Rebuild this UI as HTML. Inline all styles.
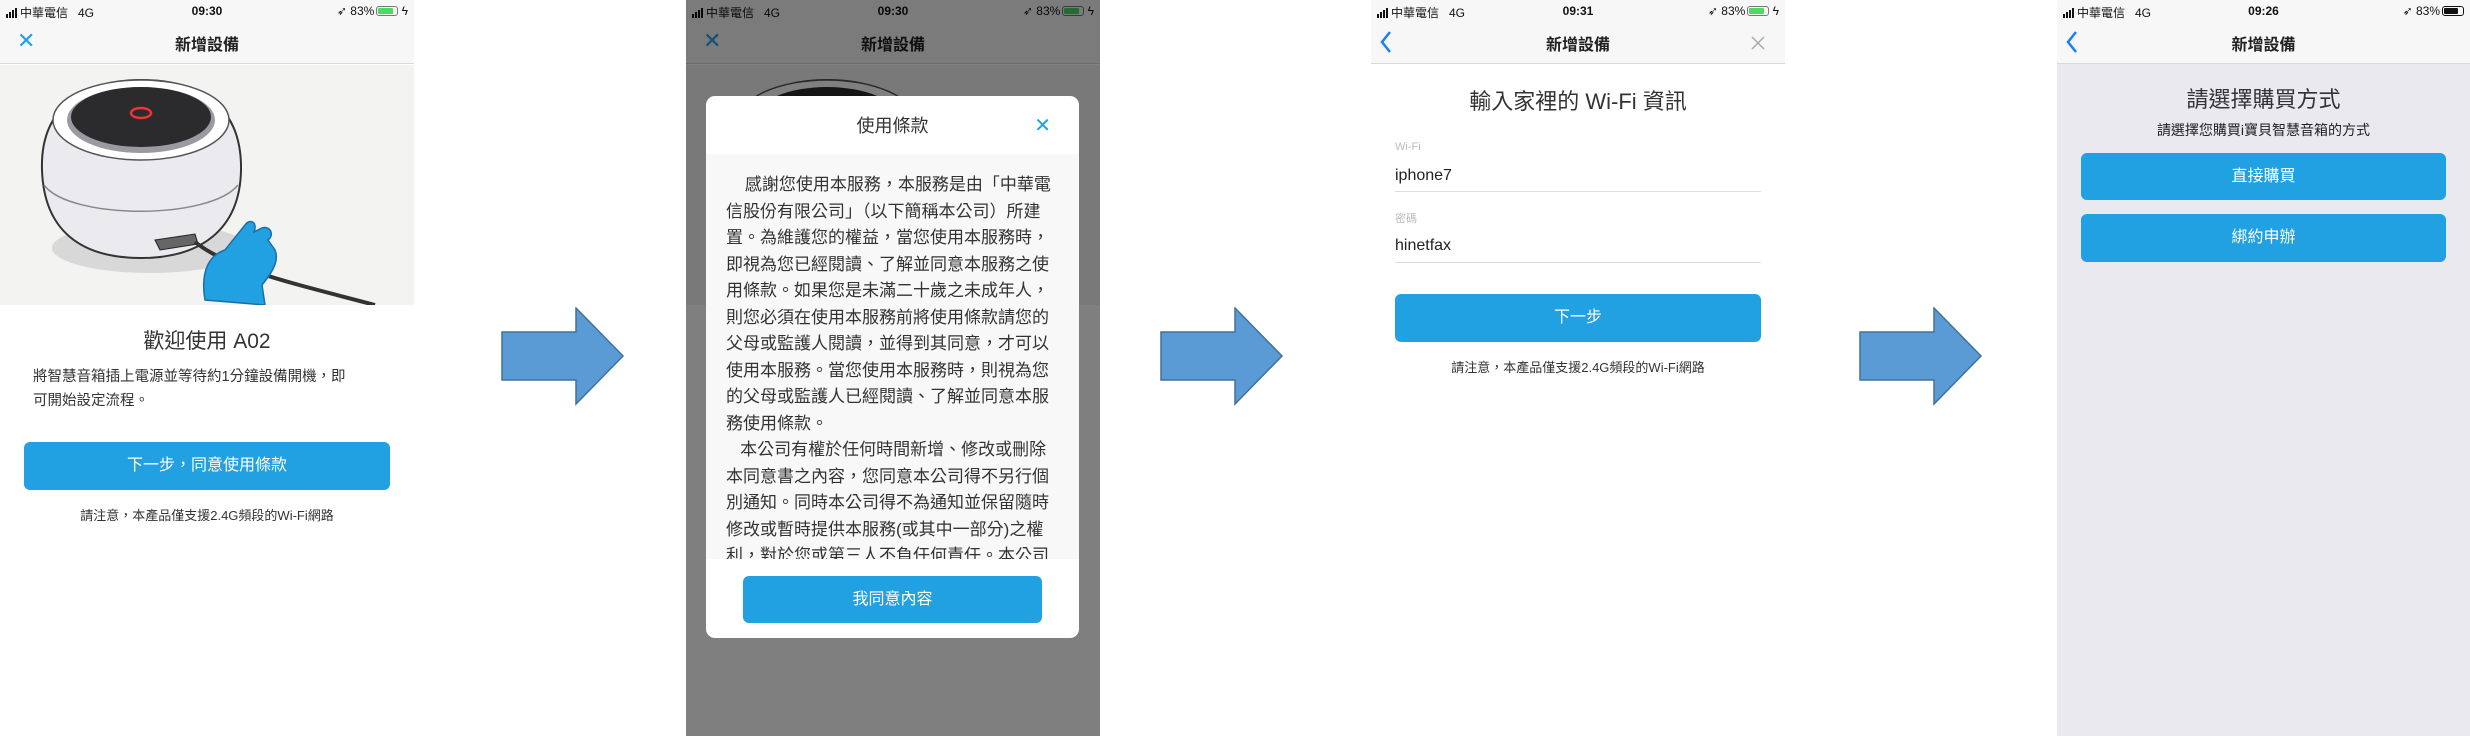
<!DOCTYPE html>
<html><head><meta charset="utf-8">
<style>
*{margin:0;padding:0;box-sizing:border-box}
body{width:2470px;height:736px;background:#fff;position:relative;overflow:hidden;font-family:"Liberation Sans","Noto Sans CJK TC",sans-serif;color:#333}
.ph{position:absolute;top:0;width:414px;height:736px;background:#fff;overflow:hidden}
.nav{position:absolute;left:0;top:0;width:100%;height:64px;background:#f7f7f7;border-bottom:1px solid #d8d8d8}
.sb{position:absolute;top:4px;height:16px;font-size:12px;color:#111;width:100%}
.sb .l{position:absolute;left:6px;top:0}
.sb .t{position:absolute;left:0;width:100%;text-align:center;font-weight:bold;font-size:12px}
.sb .r{position:absolute;right:6px;top:0}
.bars{display:inline-block;vertical-align:-1px;margin-right:2px}
.bars i{display:inline-block;width:2px;background:#111;margin-right:1px}
.bat{display:inline-block;width:22px;height:10px;border:1px solid #777;border-radius:3px;vertical-align:-1px;padding:1px;margin-left:2px}
.bat i{display:block;width:80%;height:100%;background:#4cd964;border-radius:1px}
.ttl{position:absolute;top:31px;width:100%;text-align:center;font-size:16px;font-weight:bold;color:#222}
.btn{position:absolute;background:#21a1e1;border-radius:6px;color:#fff;text-align:center;font-size:16px}
.note{position:absolute;width:100%;text-align:center;font-size:13px;color:#333}
.arr{position:absolute;top:307px}
</style></head><body>

<!-- Panel 1 -->
<div class="ph" style="left:0">
 <div class="nav">
  <div class="sb"><span class="l"><span class="bars"><i style="height:4px"></i><i style="height:6px"></i><i style="height:8px"></i><i style="height:10px"></i></span>中華電信 &nbsp; 4G</span><span class="t">09:30</span><span class="r">➶ 83%<span class="bat"><i></i></span> ϟ</span></div>
  <div style="position:absolute;left:17px;top:31px;font-size:22px;color:#21a1e1;line-height:20px">✕</div>
  <div class="ttl">新增設備</div>
 </div>
 <div style="position:absolute;top:65px;left:0;width:414px;height:240px;background:#f3f3f2">
  <svg width="414" height="240" viewBox="0 65 414 240">
   <ellipse cx="150" cy="248" rx="98" ry="25" fill="#d8d8d8"/>
   <path d="M42 170 C40 110 80 80 141 80 C205 80 242 110 241 170 C240 230 200 258 141 258 C80 258 44 230 42 170Z" fill="#ebebef" stroke="#333" stroke-width="2"/>
   <path d="M44 185 C70 220 210 220 238 185" fill="none" stroke="#888" stroke-width="1.5"/>
   <ellipse cx="141" cy="120" rx="88" ry="40" fill="#fff" stroke="#555" stroke-width="1.5"/>
   <ellipse cx="141" cy="120" rx="74" ry="33" fill="#9a9aa0"/>
   <ellipse cx="141" cy="117" rx="70" ry="30" fill="#2b2b2e"/>
   <ellipse cx="141" cy="113" rx="10" ry="5" fill="none" stroke="#e33" stroke-width="2.5"/>
   <path d="M155 240 L195 234 L198 244 L160 250Z" fill="#666" stroke="#222"/>
   <path d="M195 242 C230 270 300 285 375 305" fill="none" stroke="#333" stroke-width="4"/>
   <path d="M205 300 C200 270 210 255 225 250 L245 225 C250 218 258 222 254 232 L262 228 C270 225 275 235 268 240 L275 250 C280 262 270 275 262 285 L265 305Z" fill="#21a1e1" stroke="#1b6fa8" stroke-width="1.5"/>
  </svg>
 </div>
 <div style="position:absolute;top:325px;width:100%;text-align:center;font-size:21px;color:#333">歡迎使用 A02</div>
 <div style="position:absolute;top:365px;left:33px;width:360px;font-size:14.5px;line-height:24px;color:#333">將智慧音箱插上電源並等待約1分鐘設備開機，即<br>可開始設定流程。</div>
 <div class="btn" style="left:24px;top:442px;width:366px;height:48px;line-height:48px">下一步，同意使用條款</div>
 <div class="note" style="top:505px">請注意，本產品僅支援2.4G頻段的Wi-Fi網路</div>
</div>

<svg class="arr" style="left:500px" width="126" height="100"><path d="M2 25 H76 V1 L123 49 L76 97 V73 H2Z" fill="#5b9bd5" stroke="#41719c" stroke-width="1.5"/></svg>

<!-- Panel 2 -->
<div class="ph" style="left:686px">
 <div class="nav">
  <div class="sb"><span class="l"><span class="bars"><i style="height:4px"></i><i style="height:6px"></i><i style="height:8px"></i><i style="height:10px"></i></span>中華電信 &nbsp; 4G</span><span class="t">09:30</span><span class="r">➶ 83%<span class="bat"><i></i></span> ϟ</span></div>
  <div style="position:absolute;left:17px;top:31px;font-size:22px;color:#21a1e1;line-height:20px">✕</div>
  <div class="ttl">新增設備</div>
 </div>
 <div style="position:absolute;top:65px;left:0;width:414px;height:240px;background:#f3f3f2">
  <svg width="414" height="240" viewBox="0 65 414 240">
   <path d="M42 170 C40 110 80 80 141 80 C205 80 242 110 241 170 C240 230 200 258 141 258 C80 258 44 230 42 170Z" fill="#ebebef" stroke="#333" stroke-width="2"/>
   <ellipse cx="141" cy="120" rx="88" ry="40" fill="#fff" stroke="#555" stroke-width="1.5"/>
   <ellipse cx="141" cy="117" rx="70" ry="30" fill="#2b2b2e"/>
  </svg>
 </div>
 <div style="position:absolute;inset:0;background:rgba(0,0,0,0.5)"></div>
 <div style="position:absolute;left:20px;top:96px;width:373px;height:542px;background:#fff;border-radius:9px;overflow:hidden">
  <div style="position:absolute;top:16px;width:100%;text-align:center;font-size:18px;color:#333">使用條款</div>
  <div style="position:absolute;right:28px;top:17px;font-size:20px;color:#21a1e1">✕</div>
  <div style="position:absolute;top:58px;left:0;width:100%;height:405px;background:#f8f8f8;overflow:hidden">
   <div style="position:absolute;left:20px;top:18px;width:340px;font-size:17px;line-height:26.5px;color:#333;white-space:nowrap">&nbsp;&nbsp;&nbsp;&nbsp;感謝您使用本服務，本服務是由「中華電<br>信股份有限公司」（以下簡稱本公司）所建<br>置。為維護您的權益，當您使用本服務時，<br>即視為您已經閱讀、了解並同意本服務之使<br>用條款。如果您是未滿二十歲之未成年人，<br>則您必須在使用本服務前將使用條款請您的<br>父母或監護人閱讀，並得到其同意，才可以<br>使用本服務。當您使用本服務時，則視為您<br>的父母或監護人已經閱讀、了解並同意本服<br>務使用條款。<br>&nbsp;&nbsp;&nbsp;本公司有權於任何時間新增、修改或刪除<br>本同意書之內容，您同意本公司得不另行個<br>別通知。同時本公司得不為通知並保留隨時<br>修改或暫時提供本服務(或其中一部分)之權<br>利，對於您或第三人不負任何責任。本公司</div>
  </div>
  <div class="btn" style="left:37px;top:480px;width:299px;height:47px;line-height:47px">我同意內容</div>
 </div>
</div>

<svg class="arr" style="left:1159px" width="126" height="100"><path d="M2 25 H76 V1 L123 49 L76 97 V73 H2Z" fill="#5b9bd5" stroke="#41719c" stroke-width="1.5"/></svg>

<!-- Panel 3 -->
<div class="ph" style="left:1371px">
 <div class="nav">
  <div class="sb"><span class="l"><span class="bars"><i style="height:4px"></i><i style="height:6px"></i><i style="height:8px"></i><i style="height:10px"></i></span>中華電信 &nbsp; 4G</span><span class="t">09:31</span><span class="r">➶ 83%<span class="bat"><i></i></span> ϟ</span></div>
  <svg style="position:absolute;left:8px;top:30px" width="14" height="24"><path d="M11 2 L3 12 L11 22" fill="none" stroke="#1a7ef5" stroke-width="2.5"/></svg>
  <svg style="position:absolute;right:20px;top:36px" width="14" height="14"><path d="M1 1 L13 13 M13 1 L1 13" stroke="#aaa" stroke-width="1.5"/></svg>
  <div class="ttl">新增設備</div>
 </div>
 <div style="position:absolute;top:84px;width:100%;text-align:center;font-size:22px;color:#333">輸入家裡的 Wi-Fi 資訊</div>
 <div style="position:absolute;left:24px;top:141px;font-size:11px;color:#bbb">Wi-Fi</div>
 <div style="position:absolute;left:24px;top:167px;font-size:16px;color:#222">iphone7</div>
 <div style="position:absolute;left:24px;top:191px;width:366px;height:1px;background:#ddd"></div>
 <div style="position:absolute;left:24px;top:210px;font-size:11px;color:#bbb">密碼</div>
 <div style="position:absolute;left:24px;top:237px;font-size:16px;color:#222">hinetfax</div>
 <div style="position:absolute;left:24px;top:262px;width:366px;height:1px;background:#ddd"></div>
 <div class="btn" style="left:24px;top:294px;width:366px;height:48px;line-height:48px">下一步</div>
 <div class="note" style="top:357px">請注意，本產品僅支援2.4G頻段的Wi-Fi網路</div>
</div>

<svg class="arr" style="left:1858px" width="126" height="100"><path d="M2 25 H76 V1 L123 49 L76 97 V73 H2Z" fill="#5b9bd5" stroke="#41719c" stroke-width="1.5"/></svg>

<!-- Panel 4 -->
<div class="ph" style="left:2057px;width:413px;background:#e9e9ef">
 <div class="nav">
  <div class="sb"><span class="l"><span class="bars"><i style="height:4px"></i><i style="height:6px"></i><i style="height:8px"></i><i style="height:10px"></i></span>中華電信 &nbsp; 4G</span><span class="t">09:26</span><span class="r">➶ 83%<span class="bat" style="border-color:#111"><i style="background:#111"></i></span></span></div>
  <svg style="position:absolute;left:8px;top:30px" width="14" height="24"><path d="M11 2 L3 12 L11 22" fill="none" stroke="#1a7ef5" stroke-width="2.5"/></svg>
  <div class="ttl">新增設備</div>
 </div>
 <div style="position:absolute;top:82px;width:100%;text-align:center;font-size:22px;color:#333">請選擇購買方式</div>
 <div style="position:absolute;top:120px;width:100%;text-align:center;font-size:14px;color:#222">請選擇您購買i寶貝智慧音箱的方式</div>
 <div class="btn" style="left:24px;top:153px;width:365px;height:47px;line-height:47px">直接購買</div>
 <div class="btn" style="left:24px;top:214px;width:365px;height:48px;line-height:48px">綁約申辦</div>
</div>

</body></html>
